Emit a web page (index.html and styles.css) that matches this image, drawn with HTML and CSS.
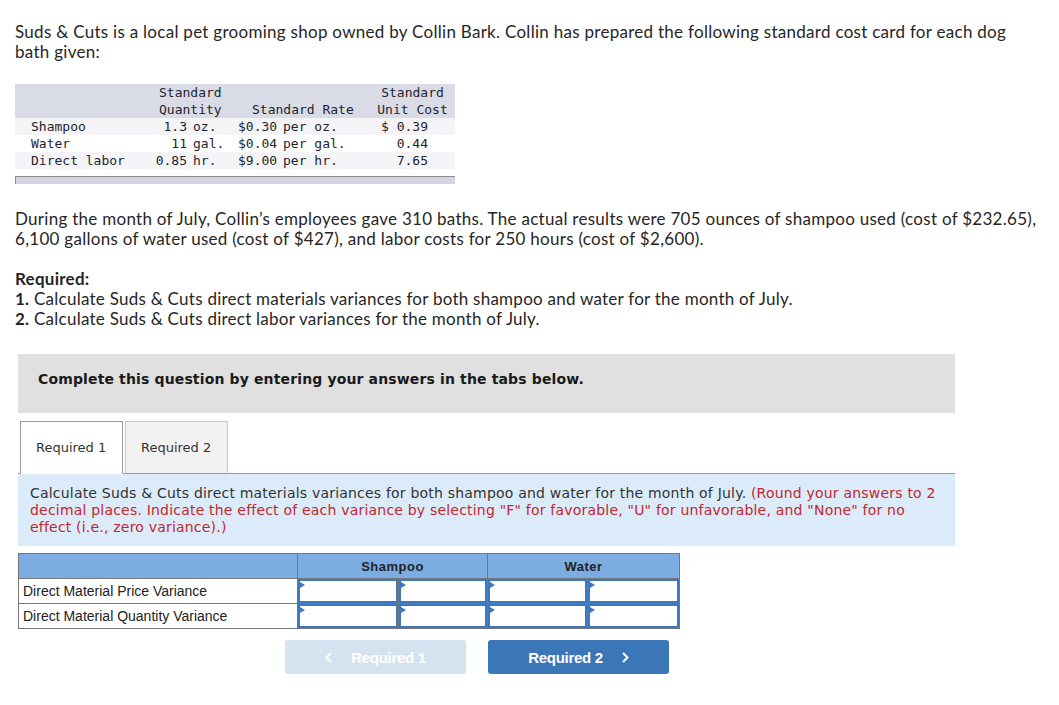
FILE: index.html
```html
<!DOCTYPE html>
<html lang="en">
<head>
<meta charset="utf-8">
<title>Suds &amp; Cuts</title>
<link rel="stylesheet" href="styles.css">
</head>
<body>
<div class="page">
  <p class="intro">Suds &amp; Cuts is a local pet grooming shop owned by Collin Bark. Collin has prepared the following standard cost card for each dog bath given:</p>

  <div class="cost-wrap">
    <table class="cost">
      <colgroup>
        <col class="c-lbl"><col class="c-qn"><col class="c-qu"><col class="c-rn"><col class="c-ru"><col class="c-cost">
      </colgroup>
      <thead>
        <tr>
          <th></th>
          <th colspan="2" class="h-qty">Standard<br>Quantity</th>
          <th colspan="2" class="h-rate">Standard Rate</th>
          <th class="h-cost">Standard<br>Unit Cost</th>
        </tr>
      </thead>
      <tbody>
        <tr class="shade">
          <td class="lbl">Shampoo</td><td class="qn">1.3</td><td class="qu">oz.</td><td class="rn">$0.30</td><td class="ru">per oz.</td><td class="cv">$ 0.39</td>
        </tr>
        <tr>
          <td class="lbl">Water</td><td class="qn">11</td><td class="qu">gal.</td><td class="rn">$0.04</td><td class="ru">per gal.</td><td class="cv">0.44</td>
        </tr>
        <tr class="shade">
          <td class="lbl">Direct labor</td><td class="qn">0.85</td><td class="qu">hr.</td><td class="rn">$9.00</td><td class="ru">per hr.</td><td class="cv">7.65</td>
        </tr>
      </tbody>
    </table>
    <div class="scrollbar"></div>
  </div>

  <p class="facts">During the month of July, Collin’s employees gave 310 baths. The actual results were 705 ounces of shampoo used (cost of $232.65), 6,100 gallons of water used (cost of $427), and labor costs for 250 hours (cost of $2,600).</p>

  <div class="required">
    <strong>Required:</strong><br>
    <strong>1.</strong> Calculate Suds &amp; Cuts direct materials variances for both shampoo and water for the month of July.<br>
    <strong>2.</strong> Calculate Suds &amp; Cuts direct labor variances for the month of July.
  </div>

  <div class="question">
    <div class="banner">Complete this question by entering your answers in the tabs below.</div>

    <div class="tabs">
      <div class="tab active">Required 1</div>
      <div class="tab">Required 2</div>
    </div>

    <div class="panel">
      <p>Calculate Suds &amp; Cuts direct materials variances for both shampoo and water for the month of July. <span class="red">(Round your answers to 2 decimal places. Indicate the effect of each variance by selecting "F" for favorable, "U" for unfavorable, and "None" for no effect (i.e., zero variance).)</span></p>
    </div>

    <table class="answers">
      <colgroup>
        <col class="a-lbl"><col class="a-s1"><col class="a-s2"><col class="a-w1"><col class="a-w2">
      </colgroup>
      <thead>
        <tr><th></th><th colspan="2">Shampoo</th><th colspan="2">Water</th></tr>
      </thead>
      <tbody>
        <tr>
          <td class="rlbl">Direct Material Price Variance</td>
          <td class="in"><div class="box"><span class="mark"></span></div></td>
          <td class="in"><div class="box"><span class="mark"></span></div></td>
          <td class="in"><div class="box"><span class="mark"></span></div></td>
          <td class="in"><div class="box"><span class="mark"></span></div></td>
        </tr>
        <tr>
          <td class="rlbl">Direct Material Quantity Variance</td>
          <td class="in"><div class="box"><span class="mark"></span></div></td>
          <td class="in"><div class="box"><span class="mark"></span></div></td>
          <td class="in"><div class="box"><span class="mark"></span></div></td>
          <td class="in"><div class="box"><span class="mark"></span></div></td>
        </tr>
      </tbody>
    </table>

    <div class="nav">
      <button class="btn prev" type="button" disabled>
        <svg class="chev" width="7" height="11" viewBox="0 0 7 11"><polyline points="6,1 1.5,5.5 6,10" fill="none" stroke="#fff" stroke-width="2"/></svg>
        <span>Required 1</span>
      </button>
      <button class="btn next" type="button">
        <span>Required 2</span>
        <svg class="chev" width="7" height="11" viewBox="0 0 7 11"><polyline points="1,1 5.5,5.5 1,10" fill="none" stroke="#fff" stroke-width="2"/></svg>
      </button>
    </div>
  </div>
</div>
</body>
</html>
```

FILE: styles.css
```css
html, body {
  margin: 0;
  padding: 0;
  background: #fff;
}

.page {
  padding: 22px 0 0 15px;
  width: 1036px;
}

.intro,
.facts,
.required {
  font-family: Lato, "Open Sans", sans-serif;
  font-size: 17px;
  line-height: 20px;
  letter-spacing: 0.28px;
  color: #262626;
  margin: 0;
}

.intro {
  max-width: 1010px;
}

.facts {
  margin-top: 25px;
}

.required {
  margin-top: 20px;
  letter-spacing: 0.25px;
}

.required strong {
  font-weight: 700;
}

/* Standard cost card */
.cost-wrap {
  margin-top: 22px;
  width: 440px;
}

.cost {
  border-collapse: collapse;
  border-spacing: 0;
  table-layout: fixed;
  width: 440px;
  font-family: "DejaVu Sans Mono", "Liberation Mono", monospace;
  font-size: 13px;
  line-height: 17px;
  color: #1f1f2e;
}

.cost th,
.cost td {
  padding: 0;
  font-weight: normal;
  white-space: nowrap;
}

.c-lbl { width: 140px; }
.c-qn { width: 34px; }
.c-qu { width: 43px; }
.c-rn { width: 49px; }
.c-ru { width: 89px; }
.c-cost { width: 85px; }

.cost thead tr {
  background: #d9dce6;
}

.cost th {
  vertical-align: bottom;
  height: 34px;
}

.h-qty {
  text-align: left;
  padding-left: 4px !important;
}

.h-rate {
  text-align: left;
  padding-left: 20px !important;
}

.h-cost {
  text-align: center;
}

.cost tbody tr {
  height: 17px;
  background: #fff;
}

.cost tbody tr.shade {
  background: #f4f4f6;
}

.lbl { padding-left: 16px !important; }
.qn { text-align: right; padding-right: 2px !important; }
.qu { padding-left: 4px !important; }
.rn { padding-left: 6px !important; }
.ru { padding-left: 2px !important; }
.cv { text-align: right; padding-right: 27px !important; }

.scrollbar {
  margin-top: 7px;
  height: 7px;
  background: #d3d6e0;
  border-top: 1px solid #8c8c8c;
  border-left: 1px solid #8c8c8c;
}

/* Question area */
.question {
  margin-top: 25px;
  margin-left: 3px;
  width: 937px;
}

.banner {
  background: #e0e0e0;
  height: 17px;
  padding: 17px 0 25px 20px;
  font-family: "DejaVu Sans", Verdana, sans-serif;
  font-size: 14px;
  font-weight: bold;
  letter-spacing: 0.14px;
  line-height: 17px;
  color: #1a1a1a;
}

.tabs {
  display: flex;
  gap: 2px;
  margin-top: 8px;
  margin-left: 2px;
  margin-bottom: -1px;
}

.tab {
  box-sizing: border-box;
  width: 103px;
  height: 53px;
  display: flex;
  align-items: center;
  padding-left: 15px;
  font-family: "DejaVu Sans", Verdana, sans-serif;
  font-size: 13px;
  color: #333;
  background: #f2f2f2;
  border: 1px solid #c8c8c8;
  border-bottom: 1px solid #999;
}

.tab.active {
  background: #fff;
  border: 1px solid #999;
  border-bottom: 1px solid #fff;
}

.panel {
  background: #dcebf9;
  border-top: 1px solid #999;
  padding: 11px 14px 10px 12px;
}

.panel p {
  margin: 0;
  font-family: "DejaVu Sans", Verdana, sans-serif;
  font-size: 14px;
  letter-spacing: 0.2px;
  line-height: 17px;
  color: #333;
}

.red {
  color: #c1272d;
}

/* Answer table */
.answers {
  margin-top: 7px;
  border-collapse: collapse;
  table-layout: fixed;
  width: 661px;
  font-family: "Liberation Sans", Arial, sans-serif;
  font-size: 14px;
  color: #222;
}

.a-lbl { width: 279px; }
.a-s1 { width: 101px; }
.a-s2 { width: 89px; }
.a-w1 { width: 100px; }
.a-w2 { width: 92px; }

.answers th,
.answers td {
  border: 1px solid #777;
  padding: 0;
}

.answers th {
  background: #7badE3;
  height: 24px;
  font-weight: bold;
  font-size: 13px;
  letter-spacing: 0.5px;
  text-align: center;
  color: #222;
}

.answers td {
  height: 24px;
}

.rlbl {
  padding-left: 4px !important;
  white-space: nowrap;
}

.in {
  vertical-align: top;
}

.box {
  position: relative;
  box-sizing: border-box;
  height: 24px;
  border: 2px solid #3d78be;
  background: #fff;
}

.mark {
  position: absolute;
  left: 0;
  top: 1px;
  width: 0;
  height: 0;
  border-top: 3px solid transparent;
  border-bottom: 3px solid transparent;
  border-left: 5px solid #3d78be;
}

/* Navigation buttons */
.nav {
  display: flex;
  gap: 22px;
  margin-top: 11px;
  margin-left: 267px;
}

.btn {
  width: 181px;
  height: 34px;
  border: none;
  border-radius: 3px;
  display: flex;
  align-items: center;
  justify-content: center;
  gap: 19px;
  font-family: "Liberation Sans", Arial, sans-serif;
  font-size: 15px;
  font-weight: bold;
  letter-spacing: -0.3px;
  color: #fff;
  padding: 0;
}

.btn.prev {
  background: #d5e3f0;
}

.btn.next {
  background: #3a76b8;
}

.chev {
  display: block;
}
```
